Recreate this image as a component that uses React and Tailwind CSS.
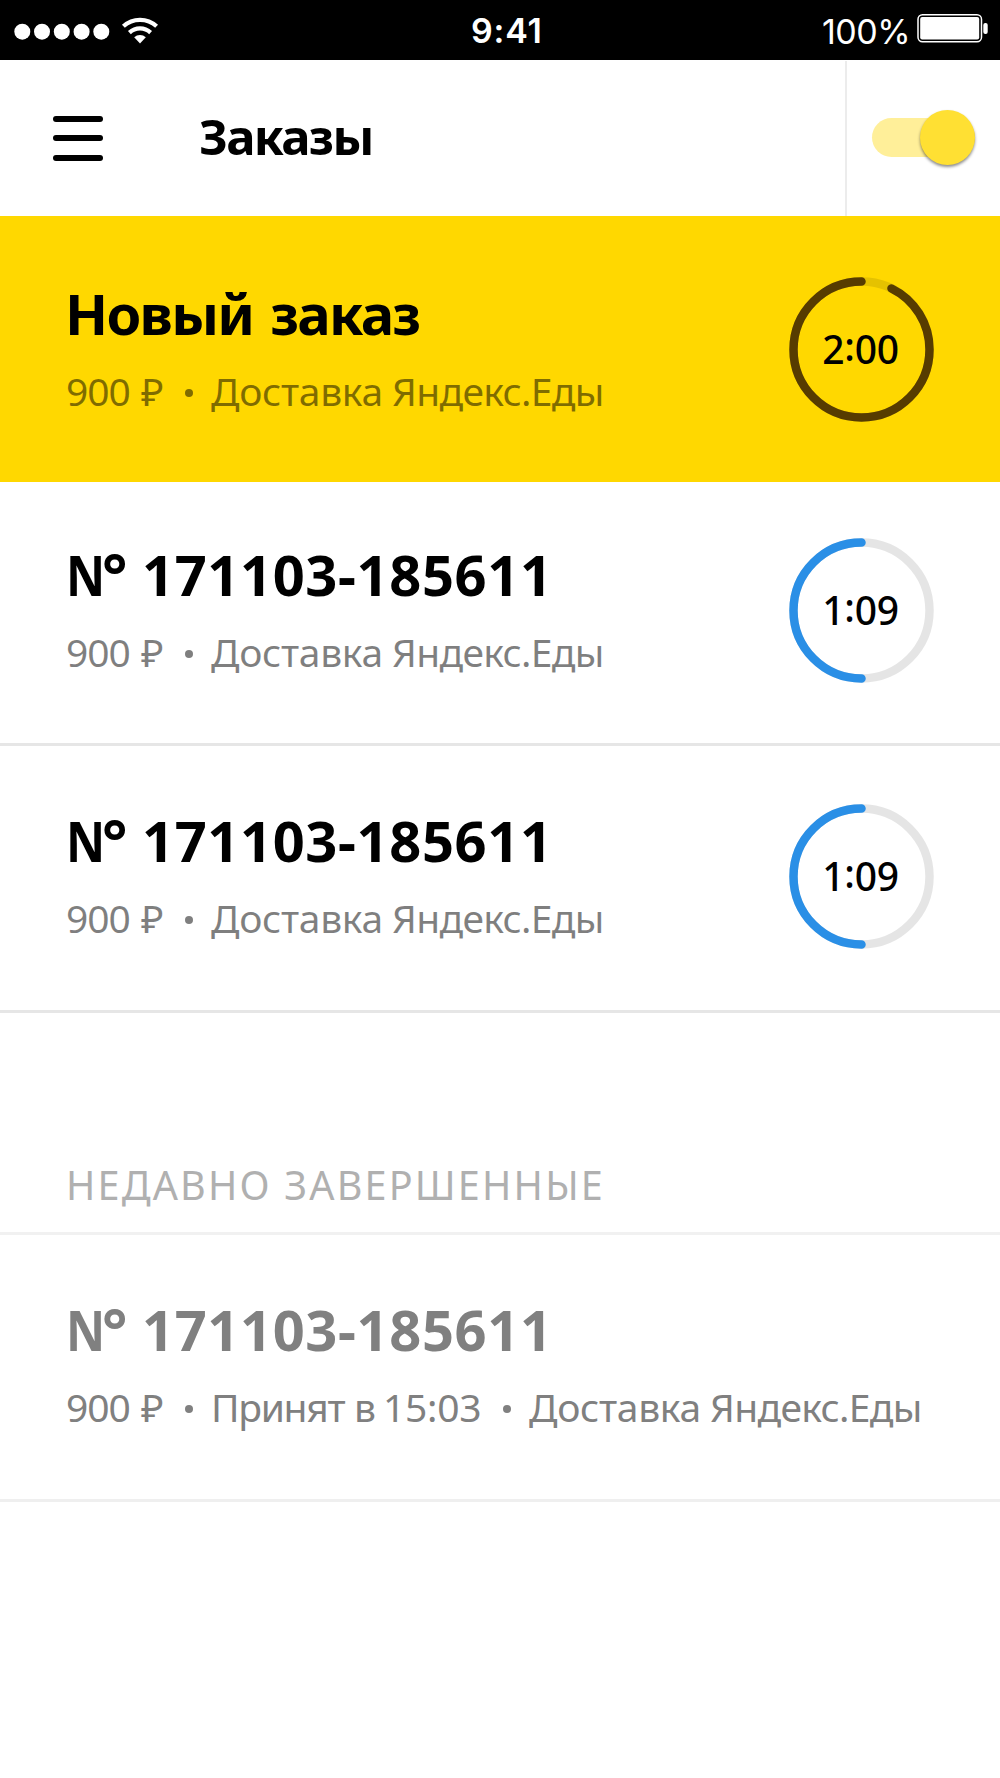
import React, { useState } from "react";

const activeOrders = [
  {
    id: 1,
    title: "Новый заказ",
    price: ["900", "₽"],
    delivery: ["Доставка", "Яндекс.Еды"],
    time: ["2", "00"],
    from: 26.2,
    isNew: true,
    rowClass: "h-[266px] bg-[#ffd800] pt-[60.5px]",
  },
  {
    id: 2,
    number: "171103-185611",
    price: ["900", "₽"],
    delivery: ["Доставка", "Яндекс.Еды"],
    time: ["1", "09"],
    from: 180,
    rowClass: "h-[264px] border-b-[3px] border-[#e6e6e6] pt-[56px]",
  },
  {
    id: 3,
    number: "171103-185611",
    price: ["900", "₽"],
    delivery: ["Доставка", "Яндекс.Еды"],
    time: ["1", "09"],
    from: 180,
    rowClass: "h-[267px] border-b-[3px] border-[#e6e6e6] pt-[58.4px]",
  },
];

const StatusBar = () => (
  <div className="flex h-[60px] items-start bg-black text-white font-['Inter',sans-serif]">
    <svg className="ml-3.5 mt-[17px] h-7 w-[146px]" viewBox="0 0 146 28" fill="none">
      {[8.3, 28, 47.8, 67.6, 87.3].map((cx) => (
        <circle key={cx} cx={cx} cy="14.7" r="8" fill="#fff" />
      ))}
      <path d="M109.4 9.3a24.5 24.5 0 0 1 33.2 0" stroke="#fff" strokeWidth="4.2" />
      <path d="M115.4 15.6a15.6 15.6 0 0 1 21.2 0" stroke="#fff" strokeWidth="4.2" />
      <path d="M126 26.4l-5.8-6.2a8.6 8.6 0 0 1 11.6 0z" fill="#fff" />
    </svg>
    <div className="ml-[311px] mt-[11px] w-[120px] text-[34px] leading-10 font-semibold tracking-[0.8px]">
      9:41
    </div>
    <div className="ml-[231px] mt-3 w-[94px] text-[34px] leading-10 tracking-[-0.5px]">
      100%
    </div>
    <svg className="mt-[14px] h-[29px] w-[73px]" viewBox="0 0 73 29" fill="none">
      <rect x="2" y="0.75" width="63.5" height="27" rx="4.5" stroke="#fff" strokeWidth="1.5" />
      <rect x="4.2" y="3" width="59" height="22.5" rx="2" fill="#fff" />
      <rect x="67.3" y="9" width="4.4" height="11" rx="2" fill="#fff" />
    </svg>
  </div>
);

const Header = () => {
  const [enabled, setEnabled] = useState(true);

  return (
    <div className="flex h-[156px] bg-white">
      <button className="ml-[53px] flex w-[50px] flex-col justify-center gap-[13.5px]">
        <span className="h-[6px] w-full rounded-full bg-black" />
        <span className="h-[6px] w-full rounded-full bg-black" />
        <span className="h-[6px] w-full rounded-full bg-black" />
      </button>
      <h1 className="ml-24 flex-1 pt-11 text-[49px] leading-[64px] font-bold tracking-[-1.7px]">
        Заказы
      </h1>
      <div className="mt-px flex w-[155px] border-l-2 border-[#ececec] pl-[25px] pt-[49px]">
        <button
          onClick={() => setEnabled(!enabled)}
          className={`mt-2 flex h-[39px] w-[103px] items-center rounded-full bg-[#ffef99] ${
            enabled ? "justify-end" : "justify-start"
          }`}
        >
          <span className="h-[55px] w-[55px] rounded-full bg-[#ffe033] shadow-[0_2px_3px_rgba(0,0,0,0.45)]" />
        </button>
      </div>
    </div>
  );
};

// Lingkaran hitung mundur
const Timer = ({ time, from, isNew }) => (
  <div className="grid h-[145px] w-[145px] place-items-center">
    <svg className="col-start-1 row-start-1 h-[145px] w-[145px] -rotate-90" viewBox="0 0 145 145" fill="none">
      <circle cx="72.5" cy="72.5" r="68" stroke="#000" strokeOpacity="0.1" strokeWidth="8.5" />
      <circle
        cx="72.5"
        cy="72.5"
        r="68"
        pathLength="360"
        stroke={isNew ? "#573c00" : "#2a8fe6"}
        strokeWidth="8.5"
        strokeLinecap="round"
        strokeDasharray={`${360 - from} 360`}
        strokeDashoffset={-from}
      />
    </svg>
    <span className="col-start-1 row-start-1 mb-1 mr-px text-[39px] leading-10 font-medium tracking-[-0.2px]">
      {time[0]}
      <span className="align-[3px] leading-none">:</span>
      {time[1]}
    </span>
  </div>
);

const Bullet = () => <span className="mt-1 h-2 w-2 shrink-0 rounded-full bg-current" />;

const OrderTitle = ({ title, number }) => (
  <h2 className="flex h-14 text-[56px] leading-14 font-bold whitespace-nowrap">
    {title ? (
      <span className="ml-px tracking-[-1.7px] [word-spacing:4px]">{title}</span>
    ) : (
      <>
        <span className="ml-[1.5px] w-[36.5px] origin-left scale-x-[0.86]">N</span>
        <span className="w-10 text-[60px]">°</span>
        <span className="tracking-[0.64px]">{number}</span>
      </>
    )}
  </h2>
);

const OrderInfo = ({ price, accepted, delivery }) => (
  <div className="mt-[30px] flex h-10 items-center text-[39px] leading-10 whitespace-nowrap">
    <span className="ml-0.5 w-[75px] tracking-[-1px]">{price[0]}</span>
    <span className="w-[44px]">{price[1]}</span>
    <Bullet />
    {accepted && (
      <>
        <span className="ml-[18px] w-[143px] tracking-[-1.3px]">{accepted[0]}</span>
        <span className="w-[29px]">{accepted[1]}</span>
        <span className="w-[120px] tracking-[-0.3px]">{accepted[2]}</span>
        <Bullet />
      </>
    )}
    <span className="ml-[18px] w-[181px] tracking-[-0.3px]">{delivery[0]}</span>
    <span className="tracking-[-0.7px]">{delivery[1]}</span>
  </div>
);

const OrderRow = ({ order }) => (
  <div className={`flex items-start justify-between pl-16 pr-[66.5px] ${order.rowClass}`}>
    <div className="pt-2">
      <OrderTitle title={order.title} number={order.number} />
      <div className="text-black/50">
        <OrderInfo price={order.price} delivery={order.delivery} />
      </div>
    </div>
    <Timer time={order.time} from={order.from} isNew={order.isNew} />
  </div>
);

const App = () => {
  return (
    <div className="h-[1778px] w-[1000px] overflow-hidden bg-white text-black font-['Noto_Sans',sans-serif]">
      <StatusBar />
      <Header />

      {activeOrders.map((order) => (
        <OrderRow key={order.id} order={order} />
      ))}

      {/* Pesanan selesai */}
      <h3 className="h-[222px] border-b-[3px] border-[#f1f1f1] pl-[66px] pt-[152px] text-[39.5px] leading-10 tracking-[2.2px] text-[#b0b0b0]">
        НЕДАВНО ЗАВЕРШЕННЫЕ
      </h3>
      <div className="h-[267px] border-b-[3px] border-[#efefef] pl-16 pt-[66px] text-[#808080]">
        <OrderTitle number="171103-185611" />
        <OrderInfo
          price={["900", "₽"]}
          accepted={["Принят", "в", "15:03"]}
          delivery={["Доставка", "Яндекс.Еды"]}
        />
      </div>
    </div>
  );
};

export default App;
